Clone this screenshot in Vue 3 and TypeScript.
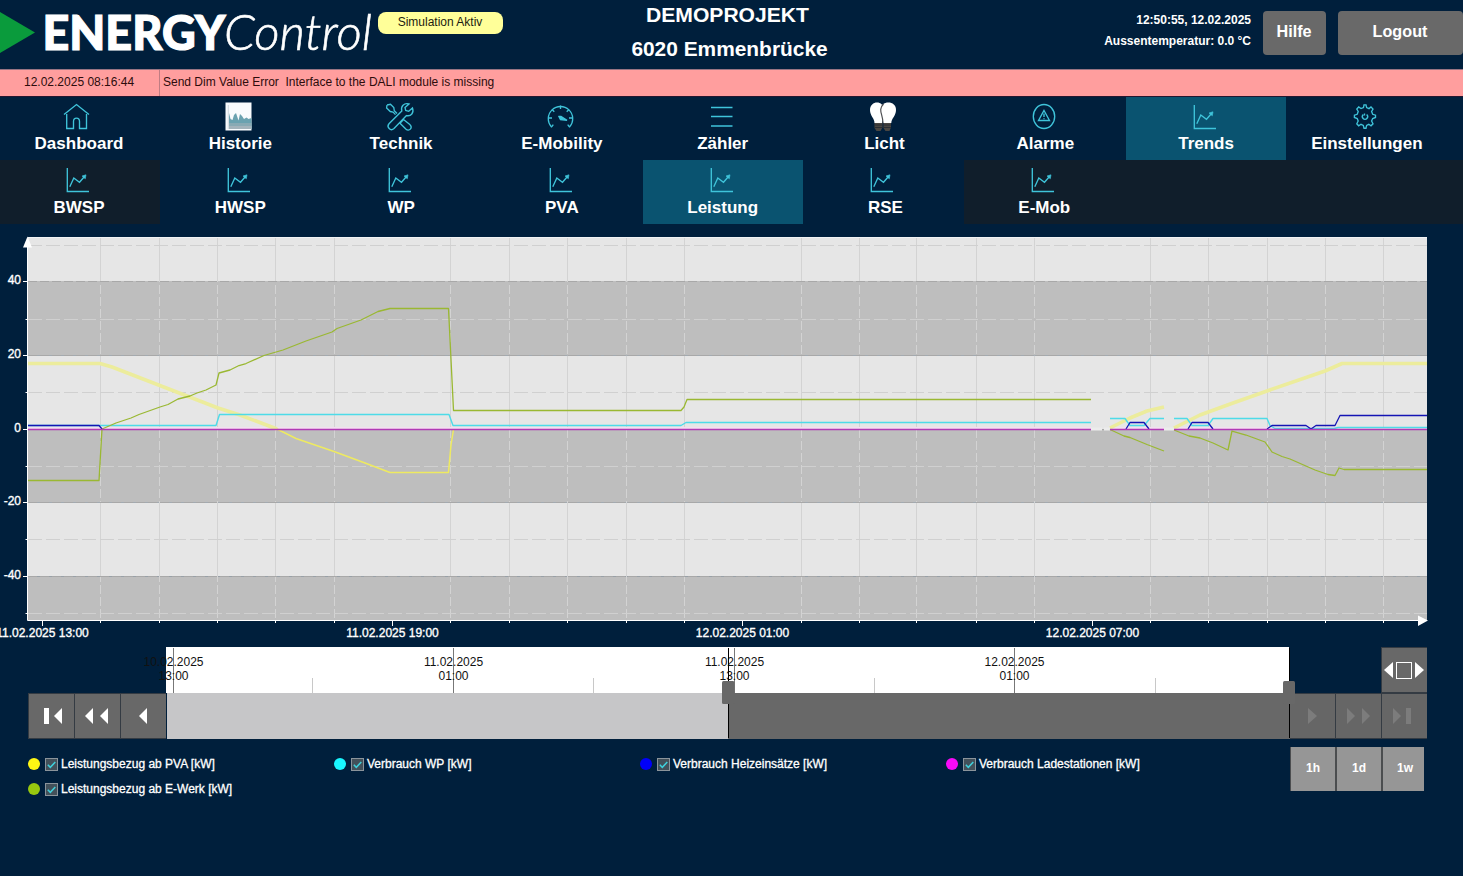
<script setup lang="ts">
interface NavItem {
  label: string
  icon: string
  active?: boolean
  dark?: boolean
}

const mainNav: NavItem[] = [
  { label: 'Dashboard', icon: 'house' },
  { label: 'Historie', icon: 'history' },
  { label: 'Technik', icon: 'tools' },
  { label: 'E-Mobility', icon: 'gauge' },
  { label: 'Zähler', icon: 'lines' },
  { label: 'Licht', icon: 'bulbs' },
  { label: 'Alarme', icon: 'alarm' },
  { label: 'Trends', icon: 'trend', active: true },
  { label: 'Einstellungen', icon: 'gear' },
]

const subNav: NavItem[] = [
  { label: 'BWSP', icon: 'trend', dark: true },
  { label: 'HWSP', icon: 'trend' },
  { label: 'WP', icon: 'trend' },
  { label: 'PVA', icon: 'trend' },
  { label: 'Leistung', icon: 'trend', active: true },
  { label: 'RSE', icon: 'trend' },
  { label: 'E-Mob', icon: 'trend', dark: true },
]

const rows = [
  { items: mainNav, cls: 'nav-main' },
  { items: subNav, cls: 'nav-sub' },
]

const bands = [
  { y: 237, h: 44, fill: '#e6e6e6' },
  { y: 281, h: 74.5, fill: '#bebebe' },
  { y: 355.5, h: 74, fill: '#e6e6e6' },
  { y: 429.5, h: 73, fill: '#bebebe' },
  { y: 502.5, h: 74, fill: '#e6e6e6' },
  { y: 576.5, h: 44, fill: '#bebebe' },
]

const yMajor = [
  { y: 281.5, label: '40' },
  { y: 355.5, label: '20' },
  { y: 429.5, label: '0' },
  { y: 502.5, label: '-20' },
  { y: 576.5, label: '-40' },
]
const yMinor = [245.5, 319.5, 392.5, 466.5, 539.5, 613.5]

const xMajor = [
  { x: 42.5, label: '11.02.2025 13:00' },
  { x: 392.5, label: '11.02.2025 19:00' },
  { x: 742.5, label: '12.02.2025 01:00' },
  { x: 1092.5, label: '12.02.2025 07:00' },
]
const xMinor = [
  100.5, 159.5, 217.5, 275.5, 334.5, 450.5, 509.5, 567.5, 626.5, 684.5,
  801.5, 859.5, 916.5, 976.5, 1034.5, 1150.5, 1208.5, 1267.5, 1325.5, 1383.5,
]

const pvaPale = [
  '28,363.5 100,363.5 112,367 218,408 240,415 277,429',
  '1110,428 1130,418 1147,411 1164,407',
  '1174,428 1200,415 1233,403 1267,391 1325,371 1342,363.5 1427,363.5',
]
const pvaThin = '277,429 296,438.5 334,451.5 365,463 390,472.5 448.5,472.5 451,445 453.5,429.5'
const grid = [
  '28,480.5 99,480.5 102,429 116,423 131,418 139,414.5 160,407 168,404.5 178,399 190,396 197,393 206,390 216,385 219,373 230,370 239,365.5 246,363.5 264,355.5 283,350 306,341 332,332 337,328.5 361,320 378,311.5 390,308.5 448.5,308.5 453.5,410.5 681,410.5 684,407 687,399.5 1091,399.5',
  '1110,429.5 1124,436 1130,437.5 1147,444.5 1164,451',
  '1174,430 1189,436 1200,438 1213,443 1228,450 1232,431 1246,435 1265,442 1272,452 1282,456.5 1290,459 1315,470 1328,474.5 1335,475.5 1339,468 1344,469.5 1427,469.5',
]
const pump = [
  '28,425.5 216,425.5 219.5,414.5 449,414.5 453,425.5 681,425.5 686,422.5 1091,422.5',
  '1110,418.5 1125,418.5 1130,425.5 1144,425.5 1150,418.5 1164,418.5',
  '1174,418.5 1187,418.5 1192,425.5 1208,425.5 1213,418.5 1267,418.5 1270,425.5 1275,428.5 1334,428.5 1338,427.5 1427,427.5',
]
const heater = [
  '28,425.5 99,425.5 102,429',
  '1126,429 1130,422.5 1144,422.5 1149,429',
  '1188,429 1192,422.5 1208,422.5 1213,429',
  '1267,429 1272,425.5 1306,425.5 1311,429 1316,425.5 1335,425.5 1340,415.5 1427,415.5',
]
const chargers = ['28,429.5 1091,429.5', '1110,429.5 1164,429.5', '1174,429.5 1427,429.5']

const scaleTicks = [
  { x: 7.5, date: '10.02.2025', time: '13:00' },
  { x: 287.5, date: '11.02.2025', time: '01:00' },
  { x: 568.5, date: '11.02.2025', time: '13:00' },
  { x: 848.5, date: '12.02.2025', time: '01:00' },
]
const scaleMinor = [146.5, 427.5, 708.5, 989.5]

const legend = [
  { label: 'Leistungsbezug ab PVA [kW]', cls: 'yellow' },
  { label: 'Verbrauch WP [kW]', cls: 'cyan' },
  { label: 'Verbrauch Heizeinsätze [kW]', cls: 'blue' },
  { label: 'Verbrauch Ladestationen [kW]', cls: 'magenta' },
  { label: 'Leistungsbezug ab E-Werk [kW]', cls: 'green' },
]
const periods = ['1h', '1d', '1w']
</script>

<template>
  <div class="app">
    <header class="top">
      <div class="brand">
        <svg class="logo" width="374" height="69" viewBox="0 0 374 69">
          <path d="M0 12 L35 32.5 L0 53 Z" fill="#0a9b3c" />
          <text x="42.5" y="50" class="logo-bold" textLength="183" lengthAdjust="spacingAndGlyphs">ENERGY</text>
          <text x="224" y="50" class="logo-light" textLength="148" lengthAdjust="spacingAndGlyphs">Control</text>
        </svg>
        <span class="pill">Simulation Aktiv</span>
      </div>
      <div class="title">
        <div class="t1">DEMOPROJEKT</div>
        <div class="t2">6020 Emmenbrücke</div>
      </div>
      <div class="status">
        <div>12:50:55, 12.02.2025</div>
        <div>Aussentemperatur: 0.0 °C</div>
      </div>
      <button class="btn help">Hilfe</button>
      <button class="btn logout">Logout</button>
    </header>

    <div class="alarm">
      <span class="alarm-time">12.02.2025 08:16:44</span>
      <span class="alarm-text">Send Dim Value Error&nbsp; Interface to the DALI module is missing</span>
    </div>

    <nav v-for="row in rows" :key="row.cls" class="nav" :class="row.cls">
      <div
        v-for="item in row.items"
        :key="item.label"
        class="cell"
        :class="{ active: item.active, dark: item.dark }"
      >
        <svg class="icon" width="32" height="32" viewBox="0 0 32 32">
          <g v-if="item.icon === 'house'">
            <path d="M3 13.5 L15.5 3.5 L28 13.5" />
            <path d="M5.7 13 V27.5 H12.5 V20.5 C12.5 16 18.5 16 18.5 20.5 V27.5 H25.5 V13" />
          </g>
          <g v-else-if="item.icon === 'history'" stroke="none">
            <rect x="3.5" y="1.5" width="26" height="28" fill="#f8fbfd" />
            <path d="M7 12 L8.5 18 L10.5 19 L12 14 L14 12 L16.5 19.5 L18 13 L20 15 L22 18 L24.5 16.5 L26.5 18 L29.5 17 V28 H7 Z" fill="#6aa2b0" />
            <path d="M7 22 H29.5 V28 H7 Z" fill="#88aab4" />
            <path d="M7 25 H29.5 V28 H7 Z" fill="#a3b3bb" />
            <path d="M6.3 4 V28" stroke="#c5ced6" stroke-width=".8" />
          </g>
          <g v-else-if="item.icon === 'tools'">
            <path d="M4 4 L7.5 3.3 L10.8 6.6 L11.3 9.8 L14 12.5 M4 4 L3.6 7 L7.3 10.5 L10 11 L12.5 13.6" />
            <path d="M26 3 C21 1.5 17.5 5.5 18.8 10 L6 22.8 C3.2 26 7.5 30.8 11 27.5 L23.5 14.6 C28 15.5 31.2 12 29.5 7 L25.7 10.3 L22.7 9.5 L22 6.5 Z" />
            <path d="M20.5 18.5 L26.5 23.2 C30.5 27 26 31 22.8 28 L17 22.2 Z" />
          </g>
          <g v-else-if="item.icon === 'gauge'">
            <path d="M7.4 25.8 A12.2 12.2 0 1 1 25.6 25.8" />
            <path d="M16.5 4.5 V8 M8 8.5 L10.3 10.8 M25 8.5 L22.7 10.8 M4.5 17 H8 M25 17 H28.5 M7.2 26.3 L9.3 23.6 M25.8 26.3 L23.7 23.6" />
            <path d="M15 15.5 L17 15.4 L23 19.3 L16.5 18.5 Z" fill="#3fc4da" />
          </g>
          <g v-else-if="item.icon === 'lines'">
            <path d="M6 6.5 H27.5 M6 15.5 H27.5 M6 25 H27.5" stroke-width="1.5" />
          </g>
          <g v-else-if="item.icon === 'bulbs'" stroke="none">
            <path d="M8.5 21.5 H16.5 V26.5 L14.5 30 H10.5 L8.5 27 Z M17.5 21.5 H25 V26.5 L23.5 30 H19.5 L17.5 27 Z" fill="#4a4641" />
            <path d="M8.5 24 H16.5 M8.5 26.5 H16.5 M17.5 24 H25 M17.5 26.5 H25" stroke="#272a31" stroke-width=".9" />
            <path d="M8.5 22 C8.5 17 4 15 4 9 C4 -1 18 -1 18 9 C18 15 16.5 17 16 22 Z" fill="#fff" />
            <path d="M17 22 C17 17 13.5 15 14 9 C14.5 -1 30.5 -1 30 9 C30 15 25.5 17 25.3 22 Z" fill="#fff" />
            <path d="M17.5 3 C11.5 9 17 13 17 22" fill="none" stroke="#4f5053" stroke-width="1.2" />
          </g>
          <g v-else-if="item.icon === 'alarm'">
            <ellipse cx="17" cy="15.5" rx="10.7" ry="12" />
            <path d="M17 9.5 L22.5 19.5 H11.5 Z" />
            <path d="M17 12.5 V16 M17 17.2 V18.3" />
          </g>
          <g v-else-if="item.icon === 'gear'">
            <path d="M15.5 6.5 L16 3.8 H18 L18.6 6.5 L21 7.6 L23 6 L25 8 L23.6 10.5 L24.7 13.3 L27.5 14.2 V16.5 L24.7 17.5 L23.6 20 L25 22.8 L23 24.8 L20.8 23.3 L18.6 24.4 L18 27.2 H16 L15.3 24.4 L13 23.3 L10.7 24.8 L8.8 22.8 L10.2 20 L9.2 17.5 L6.4 16.5 V14.2 L9.2 13.3 L10.2 10.5 L8.8 8 L10.7 6 L13 7.6 Z" />
            <path d="M15.3 13.4 A2.6 2.8 0 1 0 18.7 13.4 M16.5 12.5 V14.5" />
          </g>
          <g v-else>
            <path d="M6.3 4 V27.5 H28" />
            <path d="M8.8 22.8 L12.8 14 L18.5 18.3 L23.5 12.5" />
            <path d="M21 12 L25 10.8 L24.3 14.8 Z" fill="#3fc4da" stroke-width=".6" />
          </g>
        </svg>
        <span :class="{ shifted: item.label === 'RSE' }">{{ item.label }}</span>
      </div>
    </nav>

    <svg class="chart" width="1463" height="423" viewBox="0 224 1463 423">
      <rect v-for="b in bands" :key="b.y" x="28" :y="b.y" width="1399" :height="b.h" :fill="b.fill" />
      <g class="grid">
        <line v-for="x in xMinor" :key="x" :x1="x" :x2="x" y1="237" y2="620" stroke="#bdbdbd" opacity=".45" />
        <line v-for="x in xMinor" :key="'d' + x" :x1="x" :x2="x" y1="237" y2="620" stroke="#d3d3d3" stroke-dasharray="9 3" />
        <line v-for="y in yMinor" :key="y" x1="28" x2="1427" :y1="y" :y2="y" stroke="#d0d0d0" stroke-dasharray="14 4" />
        <line v-for="t in yMajor" :key="t.y" x1="28" x2="1427" :y1="t.y" :y2="t.y" stroke="#a8a8a8" stroke-dasharray="9 3" />
      </g>
      <g fill="#f3dff1">
        <rect x="28" y="427" width="1063" height="2" />
        <rect x="1110" y="427" width="54" height="2" />
        <rect x="1174" y="427" width="253" height="2" />
      </g>
      <path d="M1091 429 H1110 M1164 429 H1174" stroke="#ececec" stroke-width="3" stroke-dasharray="11 2" />
      <g fill="none" stroke-linejoin="round">
        <polyline v-for="p in pvaPale" :key="p" :points="p" stroke="#ecec9c" stroke-width="3.6" />
        <polyline :points="pvaThin" stroke="#eeea60" stroke-width="1.5" />
        <polyline v-for="p in pump" :key="p" :points="p" stroke="#4ddbe8" stroke-width="1.4" />
        <polyline v-for="p in grid" :key="p" :points="p" stroke="#9ab832" stroke-width="1.3" />
        <polyline v-for="p in heater" :key="p" :points="p" stroke="#1414b4" stroke-width="1.3" />
        <polyline v-for="p in chargers" :key="p" :points="p" stroke="#b03ab4" stroke-width="1.3" />
      </g>
      <g stroke="#fff" stroke-width="1">
        <path d="M27.5 245 V620.5 H1420" fill="none" />
        <path d="M28 237.5 H1427" stroke="#f1f3f5" />
        <line v-for="t in yMajor" :key="t.y" x1="23" x2="28" :y1="t.y" :y2="t.y" />
        <line v-for="y in yMinor" :key="y" x1="25.5" x2="28" :y1="y" :y2="y" />
        <line v-for="x in xMinor" :key="x" :x1="x" :x2="x" y1="620" y2="623" />
        <line v-for="t in xMajor" :key="t.x" :x1="t.x" :x2="t.x" y1="620" y2="626" />
      </g>
      <path d="M27.5 236.5 L32 247.5 H23 Z M1428 620.5 L1418 615.5 V626 Z" fill="#fff" />
      <g class="axis">
        <text v-for="t in yMajor" :key="t.y" x="21" :y="t.y + 2.5" text-anchor="end">{{ t.label }}</text>
        <text v-for="t in xMajor" :key="t.x" :x="t.x" y="637" text-anchor="middle">{{ t.label }}</text>
      </g>
    </svg>

    <section class="scroller">
      <div class="steps">
        <button class="step">
          <svg width="46" height="46" viewBox="0 0 46 46"><path d="M16 15 H21 V31 H16 Z M34 15 V31 L26 23 Z" /></svg>
        </button>
        <button class="step">
          <svg width="46" height="46" viewBox="0 0 46 46"><path d="M19 15 V31 L11 23 Z M34 15 V31 L26 23 Z" /></svg>
        </button>
        <button class="step">
          <svg width="46" height="46" viewBox="0 0 46 46"><path d="M27 15 V31 L19 23 Z" /></svg>
        </button>
      </div>
      <svg class="timeline" width="1123" height="92" viewBox="0 0 1123 92">
        <rect x="0" y="0" width="1123" height="46" fill="#fff" />
        <rect x="1" y="46" width="561" height="46" fill="#c6c6c8" />
        <rect x="562" y="46" width="562" height="46" fill="#686868" />
        <line v-for="t in scaleTicks" :key="t.x" :x1="t.x" :x2="t.x" y1="1" y2="46" stroke="#777" />
        <line v-for="x in scaleMinor" :key="x" :x1="x" :x2="x" y1="31" y2="46" stroke="#c8c8c8" />
        <g class="scale">
          <template v-for="t in scaleTicks" :key="t.x">
            <text :x="t.x" y="19">{{ t.date }}</text>
            <text :x="t.x" y="33">{{ t.time }}</text>
          </template>
        </g>
        <path d="M562.5 1 V91 M1123.5 1 V91" stroke="#000" />
        <rect x="556" y="34" width="12.5" height="23" rx="1.5" fill="#686868" />
        <rect x="1117" y="34" width="12" height="23" rx="1.5" fill="#686868" />
      </svg>
      <div class="forward">
        <button class="step fit">
          <svg width="46" height="46" viewBox="0 0 46 46">
            <path d="M12 15 V31 L3 23 Z M34 15 V31 L43 23 Z" />
            <rect x="15.5" y="15.5" width="15" height="16" fill="none" stroke="#fff" />
          </svg>
        </button>
        <div class="steps disabled">
          <button class="step">
            <svg width="46" height="46" viewBox="0 0 46 46"><path d="M19 15 V31 L28 23 Z" /></svg>
          </button>
          <button class="step">
            <svg width="46" height="46" viewBox="0 0 46 46"><path d="M12 15 V31 L20 23 Z M27 15 V31 L35 23 Z" /></svg>
          </button>
          <button class="step">
            <svg width="46" height="46" viewBox="0 0 46 46"><path d="M12 15 V31 L20 23 Z M25 15 H30 V31 H25 Z" /></svg>
          </button>
        </div>
      </div>
    </section>

    <section class="bottom">
      <div class="legend">
        <div v-for="l in legend" :key="l.label" class="entry">
          <i class="dot" :class="l.cls"></i>
          <svg class="check" width="13" height="13" viewBox="0 0 13 13">
            <rect x=".5" y=".5" width="12" height="12" fill="#42505a" stroke="#8b949b" />
            <path d="M2.8 6.8 L5.3 9.3 L10.3 4" fill="none" stroke="#3fd0dc" stroke-width="1.5" />
          </svg>
          <span>{{ l.label }}</span>
        </div>
      </div>
      <div class="periods">
        <button v-for="p in periods" :key="p">{{ p }}</button>
      </div>
    </section>
  </div>
</template>

<style>
html,
body {
  margin: 0;
  background: #001f3c;
}
</style>

<style scoped>
.app {
  width: 1463px;
  height: 876px;
  overflow: hidden;
  background: #001f3c;
  color: #fff;
  font-family: 'Liberation Sans', Arial, sans-serif;
}
.app * {
  box-sizing: border-box;
}
button {
  border: 0;
  padding: 0;
  margin: 0;
  color: #fff;
  font-family: inherit;
  font-weight: 700;
}
svg {
  display: block;
  overflow: visible;
}
.top {
  display: grid;
  grid-template-columns: 504px 451px 296px 75px 1fr;
  height: 69px;
}
.brand {
  display: flex;
  gap: 4px;
}
.logo {
  flex: none;
  fill: #fff;
}
.logo-bold {
  font: 900 48px Lato, sans-serif;
  stroke: #fff;
  stroke-width: 1.2px;
}
.logo-light {
  font: italic 300 49px Lato, sans-serif;
  stroke: #fff;
  stroke-width: 0.6px;
}
.pill {
  width: 125px;
  height: 22px;
  margin-top: 12px;
  padding-right: 1px;
  border-radius: 8px;
  background: #ffff99;
  color: #1c1c10;
  font-size: 12px;
  line-height: 20px;
  text-align: center;
}
.title {
  padding-top: 2px;
  font-weight: 700;
  text-align: center;
}
.t1 {
  margin-right: 4px;
  font-size: 21.1px;
  line-height: 26px;
}
.t2 {
  padding-top: 8px;
  font-size: 20.9px;
  line-height: 26px;
}
.status {
  padding-top: 10px;
  font-size: 12px;
  font-weight: 700;
  line-height: 21px;
  text-align: right;
}
.btn {
  height: 44px;
  margin: 11px 0 0 12px;
  border-radius: 4px;
  background: #696969;
  font-size: 16.2px;
  line-height: 20px;
  padding: 0 1px 5px 0;
}
.alarm {
  display: flex;
  height: 28px;
  border-top: 1px solid #987483;
  border-bottom: 1px solid #241630;
  background: #ff9e9e;
  color: #2d0c0c;
  font-size: 12px;
  line-height: 24px;
}
.alarm-time {
  width: 160px;
  padding-left: 24px;
  border-right: 1px solid #c07c82;
}
.alarm-text {
  padding-left: 3px;
}
.nav {
  display: flex;
  gap: 0.8px;
}
.nav-main {
  height: 63px;
}
.nav-sub {
  height: 64px;
  background: linear-gradient(90deg, #001f3c 964px, #101e2b 964px);
}
.cell {
  display: flex;
  flex: none;
  flex-direction: column;
  align-items: center;
  width: 160px;
  padding: 4px 1px 0 0;
  font-size: 17px;
  font-weight: 700;
  line-height: 20px;
}
.nav-main .cell span {
  padding-top: 1px;
}
.nav-sub .cell span {
  padding-top: 2px;
}
.nav-sub .cell .shifted {
  padding-left: 4px;
}
.cell:nth-child(1) {
  padding-right: 2px;
}
.nav-main .cell:nth-child(n + 6) {
  padding-right: 0;
  padding-left: 1px;
}
.nav-main .cell:nth-child(n + 6) .icon {
  margin-right: 5px;
}
.active {
  background: #0a5370;
}
.dark {
  background: #101e2b;
}
.icon {
  flex: none;
  margin-right: 4px;
  fill: none;
  stroke: #3fc4da;
  stroke-width: 1.35;
}
.axis {
  fill: #fff;
  stroke: #fff;
  stroke-width: 0.35px;
  font-size: 12px;
}
.scroller {
  display: flex;
  align-items: flex-end;
  height: 92px;
  margin-left: 28px;
}
.steps {
  display: flex;
}
.step {
  width: 46px;
  height: 46px;
  border: solid #343b43;
  border-width: 1px 0 1px 1px;
  background: #686868;
  overflow: hidden;
}
.step svg {
  margin: -1px 0 0 -1px;
  fill: #fff;
}
.disabled .step {
  background: #666;
}
.disabled .step svg {
  fill: #7c7c7c;
}
.timeline {
  position: relative;
  z-index: 1;
  flex: none;
}
.scale {
  fill: #111;
  font-size: 12px;
  text-anchor: middle;
}
.forward {
  display: flex;
  flex-direction: column;
  align-items: flex-end;
}
.bottom {
  display: flex;
  margin: 8px 0 0 28px;
}
.legend {
  display: grid;
  grid-template-columns: repeat(4, 306px);
  grid-auto-rows: 25px;
  width: 1262px;
  padding-top: 4px;
}
.entry {
  display: flex;
  align-items: center;
  font-size: 12px;
}
.entry span {
  padding-top: 1px;
  -webkit-text-stroke: 0.3px #fff;
}
.dot {
  width: 12px;
  height: 12px;
  border-radius: 50%;
}
.check {
  margin: 2px 3px 0 5px;
}
.yellow {
  background: #fff714;
}
.cyan {
  background: #19f6ff;
}
.blue {
  background: #0000fa;
}
.magenta {
  background: #f70af7;
}
.green {
  background: #98c80f;
}
.periods {
  display: flex;
  gap: 2px;
  width: 134px;
  height: 44px;
  padding-left: 1px;
  background: #4b4d4f;
  overflow: hidden;
}
.periods button {
  flex: none;
  width: 44px;
  background: #969696;
  font-size: 12px;
  padding-bottom: 3px;
}
</style>
